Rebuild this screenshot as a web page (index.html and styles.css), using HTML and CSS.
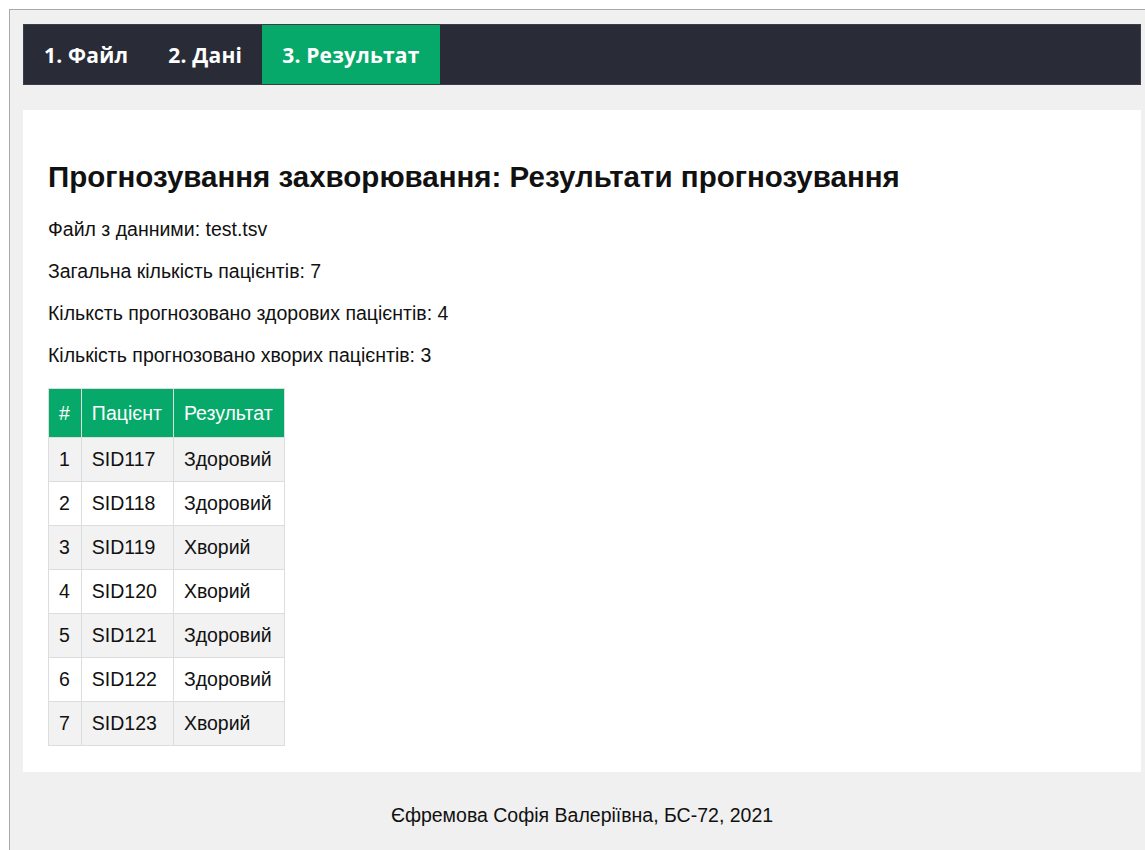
FILE: index.html
```html
<!DOCTYPE html>
<html lang="uk">
<head>
<meta charset="utf-8">
<title>Прогнозування захворювання</title>
<link rel="stylesheet" href="styles.css">
</head>
<body>
<div class="frame">
  <nav class="tabs">
    <a class="tab" href="#">1. Файл</a>
    <a class="tab" href="#">2. Дані</a>
    <a class="tab active" href="#">3. Результат</a>
  </nav>

  <main class="panel">
    <h1 class="title">Прогнозування захворювання: Результати прогнозування</h1>
    <p class="info">Файл з данними: test.tsv</p>
    <p class="info">Загальна кількість пацієнтів: 7</p>
    <p class="info">Кількст‌ь прогнозовано здорових пацієнтів: 4</p>
    <p class="info">Кількість прогнозовано хворих пацієнтів: 3</p>

    <table class="results">
      <thead>
        <tr><th>#</th><th>Пацієнт</th><th>Результат</th></tr>
      </thead>
      <tbody>
        <tr><td>1</td><td>SID117</td><td>Здоровий</td></tr>
        <tr><td>2</td><td>SID118</td><td>Здоровий</td></tr>
        <tr><td>3</td><td>SID119</td><td>Хворий</td></tr>
        <tr><td>4</td><td>SID120</td><td>Хворий</td></tr>
        <tr><td>5</td><td>SID121</td><td>Здоровий</td></tr>
        <tr><td>6</td><td>SID122</td><td>Здоровий</td></tr>
        <tr><td>7</td><td>SID123</td><td>Хворий</td></tr>
      </tbody>
    </table>
  </main>

  <footer class="footer">Єфремова Софія Валеріївна, БС-72, 2021</footer>
</div>
</body>
</html>
```

FILE: styles.css
```css
html, body {
  margin: 0;
  padding: 0;
  background: #ffffff;
}

body {
  padding: 9px 0 0 9px;
  font-family: "Liberation Sans", Arial, sans-serif;
  color: #111;
}

.frame {
  background: #f0f0f0;
  border-top: 1px solid #a9a9a9;
  border-left: 1px solid #a9a9a9;
  padding: 14px 4px 0 13px;
  min-height: 841px;
  box-sizing: border-box;
}

/* top navigation */
.tabs {
  display: flex;
  height: 61px;
  background: #292c37;
  border: 1px solid #3b3e48;
  box-sizing: border-box;
}

.tab {
  display: flex;
  align-items: center;
  padding: 0 20px;
  color: #ffffff;
  text-decoration: none;
  font-family: "Open Sans", "Noto Sans", sans-serif;
  font-weight: 700;
  font-size: 21px;
  letter-spacing: 0.2px;
}

.tab.active {
  background: #06a96a;
}

/* main content card */
.panel {
  margin-top: 25px;
  background: #ffffff;
  padding: 25px 25px 26px;
}

.title {
  margin: 25px 0 22px;
  font-size: 29.5px;
  line-height: 34px;
  font-weight: 700;
  color: #111;
}

.info {
  margin: 16px 0;
  font-size: 19.5px;
  line-height: 26px;
}

/* results table */
.results {
  margin-top: 20px;
  border-collapse: collapse;
  font-size: 19.5px;
}

.results th,
.results td {
  border: 1px solid #dddddd;
  padding: 10px 11px 11px 10px;
  line-height: 22px;
  text-align: left;
}

.results th {
  background: #06a96a;
  color: #ffffff;
  font-weight: 400;
  padding-top: 13px;
  padding-bottom: 13px;
}

.results tbody tr:nth-child(odd) td {
  background: #f2f2f2;
}

.results tbody tr:nth-child(even) td {
  background: #ffffff;
}

.footer {
  padding: 32px 0;
  text-align: center;
  font-size: 19.5px;
  line-height: 22px;
  color: #111;
}
```
